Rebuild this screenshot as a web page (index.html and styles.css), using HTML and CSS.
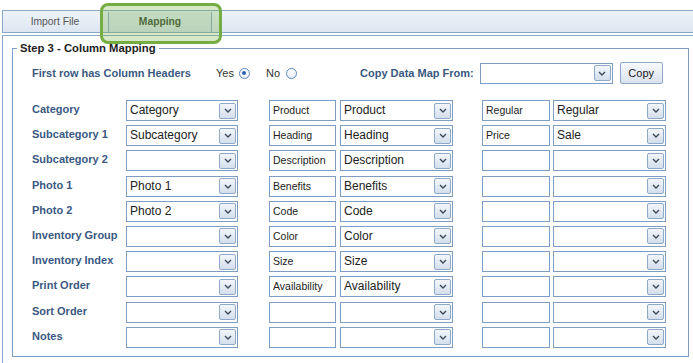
FILE: index.html
```html
<!DOCTYPE html>
<html lang="en">

<head>
    <meta charset="UTF-8">
    <meta name="viewport" content="width=device-width, initial-scale=1.0">
    <title>Column Mapping</title>
    <link rel="stylesheet" href="styles.css">
</head>

<body>
    <div class="page">
        <!-- tabs -->
        <div class="tabbar">
            <span class="tab">Import File</span>
            <span class="tab tab_active">Mapping</span>
        </div>
        <div class="highlight"></div>

        <div class="panel">
            <fieldset class="step">
                <legend>Step 3 - Column Mapping</legend>

                <div class="hdr_row">
                    <span class="hdr_label">First row has Column Headers</span>
                    <span class="opt">Yes</span><span class="radio checked"></span>
                    <span class="opt opt_no">No</span><span class="radio radio_no"></span>
                    <span class="copy_label">Copy Data Map From:</span>
                    <div class="sel sel_copy"><span class="val"></span><span class="btn"><svg viewBox="0 0 8 5"><polyline points="1,1 4,4 7,1"/></svg></span></div>
                    <button class="copy_btn">Copy</button>
                </div>

                <div class="rows">
                    <div class="row">
                        <span class="lbl">Category</span>
                        <div class="sel s1"><span class="val">Category</span><span class="btn"><svg viewBox="0 0 8 5"><polyline points="1,1 4,4 7,1"/></svg></span></div>
                        <input class="txt t1" type="text" value="Product">
                        <div class="sel s2"><span class="val">Product</span><span class="btn"><svg viewBox="0 0 8 5"><polyline points="1,1 4,4 7,1"/></svg></span></div>
                        <input class="txt t2" type="text" value="Regular">
                        <div class="sel s3"><span class="val">Regular</span><span class="btn"><svg viewBox="0 0 8 5"><polyline points="1,1 4,4 7,1"/></svg></span></div>
                    </div>
                    <div class="row">
                        <span class="lbl">Subcategory 1</span>
                        <div class="sel s1"><span class="val">Subcategory</span><span class="btn"><svg viewBox="0 0 8 5"><polyline points="1,1 4,4 7,1"/></svg></span></div>
                        <input class="txt t1" type="text" value="Heading">
                        <div class="sel s2"><span class="val">Heading</span><span class="btn"><svg viewBox="0 0 8 5"><polyline points="1,1 4,4 7,1"/></svg></span></div>
                        <input class="txt t2" type="text" value="Price">
                        <div class="sel s3"><span class="val">Sale</span><span class="btn"><svg viewBox="0 0 8 5"><polyline points="1,1 4,4 7,1"/></svg></span></div>
                    </div>
                    <div class="row">
                        <span class="lbl">Subcategory 2</span>
                        <div class="sel s1"><span class="val"></span><span class="btn"><svg viewBox="0 0 8 5"><polyline points="1,1 4,4 7,1"/></svg></span></div>
                        <input class="txt t1" type="text" value="Description">
                        <div class="sel s2"><span class="val">Description</span><span class="btn"><svg viewBox="0 0 8 5"><polyline points="1,1 4,4 7,1"/></svg></span></div>
                        <input class="txt t2" type="text" value="">
                        <div class="sel s3"><span class="val"></span><span class="btn"><svg viewBox="0 0 8 5"><polyline points="1,1 4,4 7,1"/></svg></span></div>
                    </div>
                    <div class="row">
                        <span class="lbl">Photo 1</span>
                        <div class="sel s1"><span class="val">Photo 1</span><span class="btn"><svg viewBox="0 0 8 5"><polyline points="1,1 4,4 7,1"/></svg></span></div>
                        <input class="txt t1" type="text" value="Benefits">
                        <div class="sel s2"><span class="val">Benefits</span><span class="btn"><svg viewBox="0 0 8 5"><polyline points="1,1 4,4 7,1"/></svg></span></div>
                        <input class="txt t2" type="text" value="">
                        <div class="sel s3"><span class="val"></span><span class="btn"><svg viewBox="0 0 8 5"><polyline points="1,1 4,4 7,1"/></svg></span></div>
                    </div>
                    <div class="row">
                        <span class="lbl">Photo 2</span>
                        <div class="sel s1"><span class="val">Photo 2</span><span class="btn"><svg viewBox="0 0 8 5"><polyline points="1,1 4,4 7,1"/></svg></span></div>
                        <input class="txt t1" type="text" value="Code">
                        <div class="sel s2"><span class="val">Code</span><span class="btn"><svg viewBox="0 0 8 5"><polyline points="1,1 4,4 7,1"/></svg></span></div>
                        <input class="txt t2" type="text" value="">
                        <div class="sel s3"><span class="val"></span><span class="btn"><svg viewBox="0 0 8 5"><polyline points="1,1 4,4 7,1"/></svg></span></div>
                    </div>
                    <div class="row">
                        <span class="lbl">Inventory Group</span>
                        <div class="sel s1"><span class="val"></span><span class="btn"><svg viewBox="0 0 8 5"><polyline points="1,1 4,4 7,1"/></svg></span></div>
                        <input class="txt t1" type="text" value="Color">
                        <div class="sel s2"><span class="val">Color</span><span class="btn"><svg viewBox="0 0 8 5"><polyline points="1,1 4,4 7,1"/></svg></span></div>
                        <input class="txt t2" type="text" value="">
                        <div class="sel s3"><span class="val"></span><span class="btn"><svg viewBox="0 0 8 5"><polyline points="1,1 4,4 7,1"/></svg></span></div>
                    </div>
                    <div class="row">
                        <span class="lbl">Inventory Index</span>
                        <div class="sel s1"><span class="val"></span><span class="btn"><svg viewBox="0 0 8 5"><polyline points="1,1 4,4 7,1"/></svg></span></div>
                        <input class="txt t1" type="text" value="Size">
                        <div class="sel s2"><span class="val">Size</span><span class="btn"><svg viewBox="0 0 8 5"><polyline points="1,1 4,4 7,1"/></svg></span></div>
                        <input class="txt t2" type="text" value="">
                        <div class="sel s3"><span class="val"></span><span class="btn"><svg viewBox="0 0 8 5"><polyline points="1,1 4,4 7,1"/></svg></span></div>
                    </div>
                    <div class="row">
                        <span class="lbl">Print Order</span>
                        <div class="sel s1"><span class="val"></span><span class="btn"><svg viewBox="0 0 8 5"><polyline points="1,1 4,4 7,1"/></svg></span></div>
                        <input class="txt t1" type="text" value="Availability">
                        <div class="sel s2"><span class="val">Availability</span><span class="btn"><svg viewBox="0 0 8 5"><polyline points="1,1 4,4 7,1"/></svg></span></div>
                        <input class="txt t2" type="text" value="">
                        <div class="sel s3"><span class="val"></span><span class="btn"><svg viewBox="0 0 8 5"><polyline points="1,1 4,4 7,1"/></svg></span></div>
                    </div>
                    <div class="row">
                        <span class="lbl">Sort Order</span>
                        <div class="sel s1"><span class="val"></span><span class="btn"><svg viewBox="0 0 8 5"><polyline points="1,1 4,4 7,1"/></svg></span></div>
                        <input class="txt t1" type="text" value="">
                        <div class="sel s2"><span class="val"></span><span class="btn"><svg viewBox="0 0 8 5"><polyline points="1,1 4,4 7,1"/></svg></span></div>
                        <input class="txt t2" type="text" value="">
                        <div class="sel s3"><span class="val"></span><span class="btn"><svg viewBox="0 0 8 5"><polyline points="1,1 4,4 7,1"/></svg></span></div>
                    </div>
                    <div class="row">
                        <span class="lbl">Notes</span>
                        <div class="sel s1"><span class="val"></span><span class="btn"><svg viewBox="0 0 8 5"><polyline points="1,1 4,4 7,1"/></svg></span></div>
                        <input class="txt t1" type="text" value="">
                        <div class="sel s2"><span class="val"></span><span class="btn"><svg viewBox="0 0 8 5"><polyline points="1,1 4,4 7,1"/></svg></span></div>
                        <input class="txt t2" type="text" value="">
                        <div class="sel s3"><span class="val"></span><span class="btn"><svg viewBox="0 0 8 5"><polyline points="1,1 4,4 7,1"/></svg></span></div>
                    </div>
                </div>
            </fieldset>
        </div>
    </div>
</body>

</html>
```

FILE: styles.css
```css
* {
    margin: 0;
    padding: 0;
    box-sizing: border-box;
}

body {
    font-family: "Liberation Sans", Arial, sans-serif;
    background: #fff;
    color: #222;
    overflow: hidden;
}

.page {
    padding-top: 10px;
}

/* 标签栏 */
.tabbar {
    display: flex;
    margin-left: 2px;
    height: 23px;
    border-top: 1px solid #8ba7c9;
    border-left: 1px solid #8ba7c9;
    border-bottom: 1px solid #8ba7c9;
    background: linear-gradient(#eef3f9, #dde6f1);
}

.tab {
    width: 94px;
    margin-left: 5px;
    font-size: 10.3px;
    line-height: 21px;
    text-align: center;
    color: #555;
}

.tab_active {
    width: 104px;
    margin-left: 6px;
    margin-top: 1px;
    line-height: 19px;
    font-weight: bold;
    color: #3f4a3a;
    background: linear-gradient(#e4ecf5, #d6e1ed);
    border-left: 1px solid #8ba7c9;
    border-right: 1px solid #8ba7c9;
}

/* green call-out over the active tab */
.highlight {
    position: absolute;
    left: 100px;
    top: 3px;
    width: 122px;
    height: 41px;
    border: 3px solid #74ae43;
    border-radius: 8px;
    background-color: rgba(120, 180, 70, 0.3);
}

.panel {
    margin-left: 2px;
    margin-top: 2px;
    border-top: 1px solid #8ba7c9;
    border-left: 1px solid #8ba7c9;
    padding: 5px 0 20px 9px;
}

.step {
    width: 677px;
    height: 316px;
    border: 1px solid #7f9dc4;
    padding: 7px 0 0 19px;
}

.step legend {
    margin-left: -15px;
    padding: 0 3px;
    font-size: 11.3px;
    line-height: 14px;
    font-weight: bold;
    color: #1e1e1e;
}

/* 第一行 */
.hdr_row {
    display: flex;
    align-items: center;
    height: 22px;
}

.hdr_label,
.copy_label,
.lbl {
    font-size: 11px;
    font-weight: bold;
    color: #3a5982;
}

.hdr_label {
    width: 184px;
}

.opt {
    font-size: 11px;
    color: #333;
}

.opt_no {
    margin-left: 16px;
}

.radio {
    width: 11px;
    height: 11px;
    margin-left: 5px;
    border: 1px solid #5b87c0;
    border-radius: 50%;
    background: linear-gradient(#fff, #e9eff7);
    display: flex;
    align-items: center;
    justify-content: center;
}

.radio.checked::after {
    content: '';
    width: 4px;
    height: 4px;
    border-radius: 50%;
    background-color: #2d62b2;
}

.radio_no {
    margin-left: 6px;
}

.copy_label {
    margin-left: 63px;
}

.sel_copy {
    width: 133px;
    height: 20px;
    margin-left: 6px;
}

.copy_btn {
    width: 43px;
    height: 22px;
    margin-left: 7px;
    font-family: "Liberation Sans", Arial, sans-serif;
    font-size: 11px;
    color: #1a1a1a;
    border: 1px solid #8ea8c8;
    border-radius: 2px;
    background: linear-gradient(#f7f9fc, #dae3ee);
}

/* 映射行 */
.rows {
    display: flex;
    flex-direction: column;
    gap: 4.2px;
    margin-top: 16px;
}

.row {
    display: flex;
    height: 21px;
}

.lbl {
    width: 94px;
    line-height: 18px;
}

.sel {
    display: flex;
    align-items: center;
    height: 21px;
    border: 1px solid #7e9dc4;
    background-color: #fff;
}

.sel .val {
    flex: 1;
    padding-left: 3px;
    font-size: 12px;
    line-height: 19px;
    color: #222;
    white-space: nowrap;
    overflow: hidden;
}

.sel .btn {
    width: 17px;
    height: 16px;
    margin-right: 1px;
    border: 1px solid #8ea9c9;
    border-radius: 2px;
    background: linear-gradient(#f3f6fa, #d3dfec);
    display: flex;
    align-items: center;
    justify-content: center;
}

.sel .btn svg {
    width: 8px;
    height: 5px;
    fill: none;
    stroke: #3d4a5a;
    stroke-width: 1.4;
}

.s1 {
    width: 112px;
}

.s2,
.s3 {
    width: 113px;
}

.s2 {
    margin-left: 4px;
}

.s3 {
    margin-left: 3px;
}

.txt {
    height: 21px;
    border: 1px solid #7e9dc4;
    padding: 0 3px 1px;
    font-family: "Liberation Sans", Arial, sans-serif;
    font-size: 10.5px;
    line-height: 18px;
    color: #222;
    outline: none;
}

.t1 {
    width: 67px;
    margin-left: 31px;
}

.t2 {
    width: 68px;
    margin-left: 29px;
}
```
